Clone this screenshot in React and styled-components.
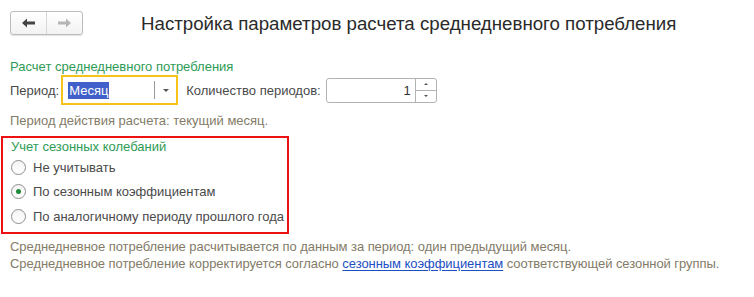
import React from "react";
import styled, { createGlobalStyle } from "styled-components";

const green = "#2e9b55";
const muted = "#837b67";
const ink = "#4a4a4a";
const link = "#1b4fc2";

const Global = createGlobalStyle`
  body {
    margin: 0;
    background: #fff;
    font-family: "Liberation Sans", Arial, sans-serif;
    font-size: 13px;
    color: ${ink};
  }
`;

const Page = styled.div`
  width: 754px;
  height: 297px;
  box-sizing: border-box;
  padding: 11px 0 0 0;
`;

const Header = styled.div`
  display: flex;
  align-items: center;
  padding-left: 10px;
  height: 24px;
`;

const NavGroup = styled.div`
  display: flex;
  width: 73px;
  height: 24px;
  box-sizing: border-box;
  border: 1px solid #bdbdbd;
  border-radius: 3px;
  background: linear-gradient(#ffffff, #f2f2f2);
  box-shadow: 0 1px 1px rgba(0, 0, 0, 0.12);
`;

const NavButton = styled.div`
  flex: 1;
  display: flex;
  align-items: center;
  justify-content: center;
  & + & {
    border-left: 1px solid #d6d6d6;
  }
`;

const Title = styled.h1`
  margin: 1px 0 0 58px;
  font-weight: normal;
  font-size: 18.7px;
  color: #2a2a2a;
  white-space: nowrap;
`;

const Body = styled.div`
  padding: 0 0 0 10px;
  margin-top: 24px;
`;

const GroupTitle = styled.div`
  color: ${green};
  line-height: 16px;
`;

const Row = styled.div`
  display: flex;
  align-items: center;
  height: 30px;
`;

const Label = styled.span`
  color: ${ink};
  white-space: nowrap;
  margin-right: ${(p) => p.gap || 0}px;
`;

const Combo = styled.div`
  display: flex;
  align-items: center;
  width: 117px;
  height: 30px;
  box-sizing: border-box;
  border: 2px solid #f5c31a;
  padding: 0 0 0 5px;
  margin-right: 8px;
`;

const Selected = styled.span`
  background: #3f61c9;
  color: #fff;
  padding: 1px;
  line-height: 15px;
`;

const ComboSpace = styled.div`
  flex: 1;
`;

const ComboButton = styled.div`
  width: 21px;
  height: 18px;
  border-left: 1px solid #9a9a9a;
  display: flex;
  align-items: center;
  justify-content: center;
`;

const Caret = styled.div`
  width: 0;
  height: 0;
  border-left: 3px solid transparent;
  border-right: 3px solid transparent;
  border-top: 3px solid #555;
`;

const SpinBox = styled.div`
  display: flex;
  width: 111px;
  height: 25px;
  box-sizing: border-box;
  border: 1px solid #b3b3b3;
  border-radius: 3px;
  margin-left: 5px;
`;

const SpinValue = styled.div`
  flex: 1;
  text-align: right;
  padding-right: 4px;
  line-height: 23px;
  color: #333;
`;

const SpinButtons = styled.div`
  width: 20px;
  display: flex;
  flex-direction: column;
  border-left: 1px solid #b3b3b3;
`;

const SpinArrow = styled.div`
  flex: 1;
  display: flex;
  align-items: center;
  justify-content: center;
  & + & {
    border-top: 1px solid #b3b3b3;
  }
  &::after {
    content: "";
    border-left: 2px solid transparent;
    border-right: 2px solid transparent;
    ${(p) =>
      p.up
        ? "border-bottom: 2px solid #555;"
        : "border-top: 2px solid #555;"}
  }
`;

const Note = styled.div`
  color: ${muted};
  line-height: 16px;
  letter-spacing: ${(p) => p.spacing || 0}px;
  margin-top: ${(p) => p.top || 0}px;
`;

const Seasonal = styled.div`
  width: 288px;
  box-sizing: border-box;
  border: 2px solid #ee1111;
  margin: 7px 0 0 -9px;
  padding: 1px 0 2px 8px;
  height: 98px;
`;

const RadioRow = styled.label`
  display: flex;
  align-items: center;
  height: 24.5px;
  gap: 7px;
  color: ${ink};
`;

const RadioCircle = styled.span`
  width: 15px;
  height: 15px;
  box-sizing: border-box;
  border-radius: 50%;
  border: 1px solid #8e8e8e;
  background: linear-gradient(#f4f4f4, #ffffff);
  display: flex;
  align-items: center;
  justify-content: center;
  &::after {
    content: "";
    width: 5px;
    height: 5px;
    border-radius: 50%;
    background: ${(p) => (p.checked ? "#1f8a3c" : "transparent")};
  }
`;

const Footer = styled.div`
  margin-top: 5px;
`;

const Link = styled.a`
  color: ${link};
  text-decoration: underline;
  text-underline-offset: 2px;
`;

const Arrow = ({ color, flip }) => (
  <svg width="13" height="10" viewBox="0 0 13 10" style={{ transform: flip ? "scaleX(-1)" : undefined }}>
    <path d="M0 5 L5 0.5 L5 3.5 L13 3.5 L13 6.5 L5 6.5 L5 9.5 Z" fill={color} />
  </svg>
);

const options = [
  { text: "Не учитывать", checked: false },
  { text: "По сезонным коэффициентам", checked: true },
  { text: "По аналогичному периоду прошлого года", checked: false },
];

export default function App() {
  return (
    <Page>
      <Global />
      <Header>
        <NavGroup>
          <NavButton>
            <Arrow color="#444" />
          </NavButton>
          <NavButton>
            <Arrow color="#b5b5b5" flip />
          </NavButton>
        </NavGroup>
        <Title>Настройка параметров расчета среднедневного потребления</Title>
      </Header>
      <Body>
        <GroupTitle>Расчет среднедневного потребления</GroupTitle>
        <Row>
          <Label gap={2}>Период:</Label>
          <Combo>
            <Selected>Месяц</Selected>
            <ComboSpace />
            <ComboButton>
              <Caret />
            </ComboButton>
          </Combo>
          <Label>Количество периодов:</Label>
          <SpinBox>
            <SpinValue>1</SpinValue>
            <SpinButtons>
              <SpinArrow up />
              <SpinArrow />
            </SpinButtons>
          </SpinBox>
        </Row>
        <Note top={8}>Период действия расчета: текущий месяц.</Note>
        <Seasonal>
          <GroupTitle>Учет сезонных колебаний</GroupTitle>
          {options.map((o) => (
            <RadioRow key={o.text}>
              <RadioCircle checked={o.checked} />
              {o.text}
            </RadioRow>
          ))}
        </Seasonal>
        <Footer>
          <Note spacing={-0.05}>Среднедневное потребление расчитывается по данным за период: один предыдущий месяц.</Note>
          <Note spacing={-0.06} top={1}>
            Среднедневное потребление корректируется согласно <Link>сезонным коэффициентам</Link> соответствующей сезонной группы.
          </Note>
        </Footer>
      </Body>
    </Page>
  );
}
